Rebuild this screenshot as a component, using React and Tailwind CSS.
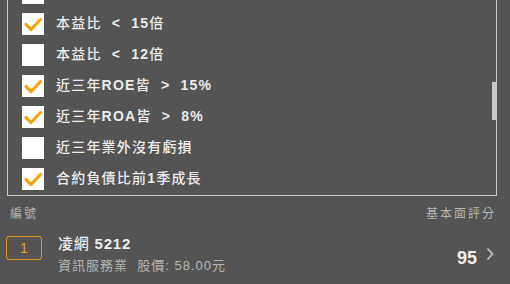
const FILTERS = [
  { label: '', checked: false },
  { label: '本益比  <  15倍', checked: true },
  { label: '本益比  <  12倍', checked: false },
  { label: '近三年ROE皆  >  15%', checked: true },
  { label: '近三年ROA皆  >  8%', checked: true },
  { label: '近三年業外沒有虧損', checked: false },
  { label: '合約負債比前1季成長', checked: true },
]

// latin / digits bold, CJK medium
function Mixed({ text }) {
  return text.split(/([A-Za-z0-9%<>.:]+)/).map((part, i) =>
    /[A-Za-z0-9%<>]/.test(part)
      ? <span key={i} className="font-bold">{part}</span>
      : <span key={i} className="font-medium">{part}</span>
  )
}

function CheckBox({ checked }) {
  return (
    <div className="w-[22px] h-[22px] bg-white shrink-0 flex items-center justify-center">
      {checked && (
        <svg width="22" height="22" viewBox="0 0 22 22" fill="none">
          <path d="M4 11.5 L9 16.5 L18.5 6.5" stroke="#f5a30f" strokeWidth="3.2" strokeLinecap="round" strokeLinejoin="round" />
        </svg>
      )}
    </div>
  )
}

export default function App() {
  return (
    <div
      className="w-[510px] h-[284px] bg-[#545454] overflow-hidden"
      style={{ fontFamily: '"Liberation Sans", "Noto Sans CJK TC", sans-serif' }}
    >
      {/* filter list, scrolled */}
      <div className="relative ml-[7px] w-[490px] h-[196px] border-x border-b border-[#c8c8c8] overflow-hidden">
        <div className="-mt-[23px] pl-[14px]">
          {FILTERS.map((f, i) => (
            <div key={i} className="h-[31px] flex items-center gap-[12px]">
              <CheckBox checked={f.checked} />
              <span className="text-[14px] text-[#ebebeb] tracking-[1.2px] whitespace-pre">
                <Mixed text={f.label} />
              </span>
            </div>
          ))}
        </div>
        <div className="absolute right-0 top-[82px] w-[4px] h-[38px] bg-[#c8c8c8]" />
      </div>

      {/* header */}
      <div className="flex justify-between items-center pl-[10px] pr-[14px] pt-[10px] text-[12px] leading-[16px] text-[#b4b4b4] tracking-[2px]">
        <span>編號</span>
        <span>基本面評分</span>
      </div>

      {/* result row */}
      <div className="flex items-start pl-[6px] pr-[15px] pt-[12px]">
        <div className="mt-[2px] w-[36px] h-[24px] border border-[#e09a1a] rounded-[3px] flex items-center justify-center text-[14px] text-[#f0a020]">
          1
        </div>
        <div className="ml-[16px] flex-1">
          <div className="text-[15px] text-[#ebebeb] leading-[20px] tracking-[0.8px] whitespace-pre">
            <span className="font-medium">凌網 </span><span className="font-bold">5212</span>
          </div>
          <div className="mt-[3px] text-[13px] text-[#b4b4b4] leading-[18px] tracking-[1px] whitespace-pre">資訊服務業  股價: 58.00元</div>
        </div>
        <div className="mt-[14px] flex items-center gap-[8px]">
          <span className="text-[18px] leading-[20px] font-bold text-[#f0f0f0]">95</span>
          <svg width="10" height="14" viewBox="0 0 10 14" fill="none" className="-mt-[8px]">
            <path d="M2.5 1.5 L7.5 7 L2.5 12.5" stroke="#c0c0c0" strokeWidth="1.8" />
          </svg>
        </div>
      </div>
    </div>
  )
}
